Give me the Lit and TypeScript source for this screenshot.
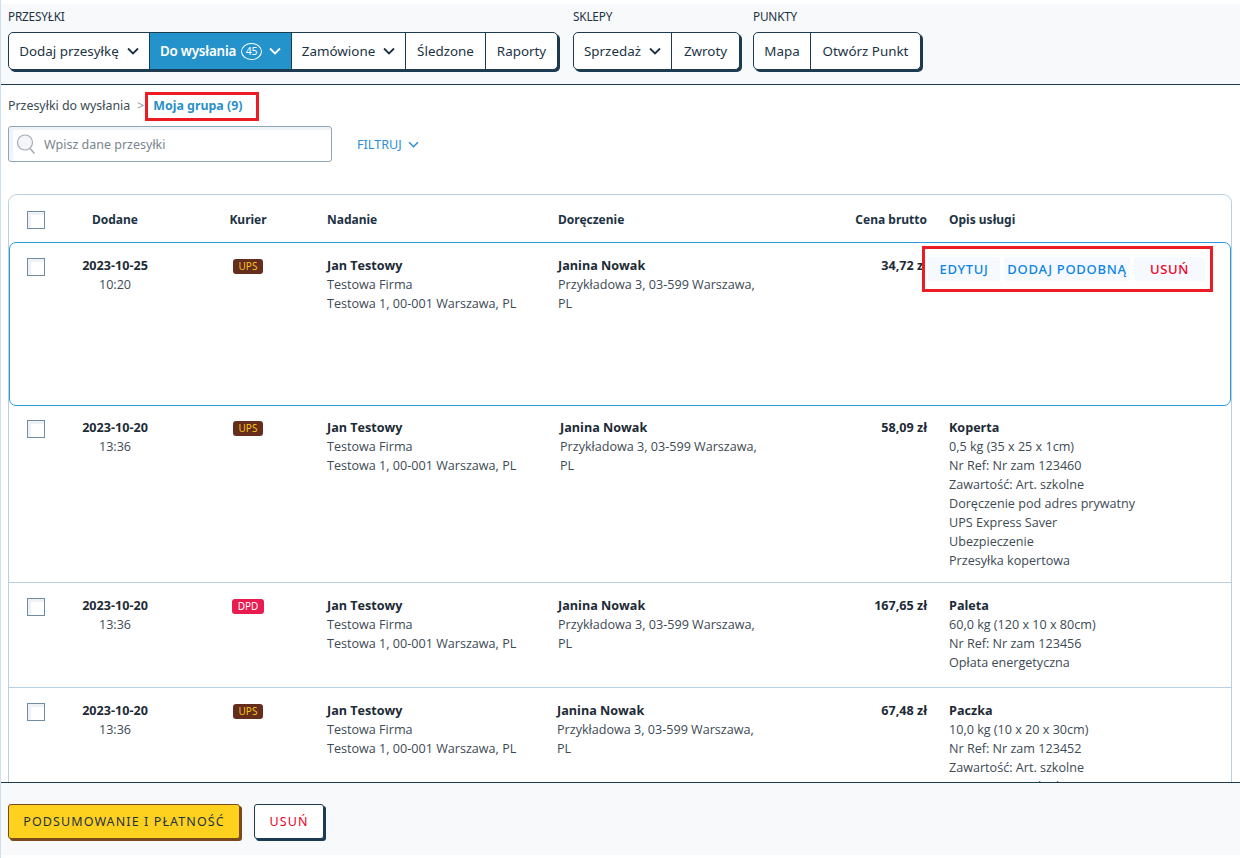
import { LitElement, html, css } from 'lit';
import { customElement } from 'lit/decorators.js';

const chevron = html`<svg class="chev" viewBox="0 0 12 8"><path d="M1 1.5l5 5 5-5" fill="none" stroke="currentColor" stroke-width="1.8"/></svg>`;

const ADDR = 'Przykładowa 3, 03-599 Warszawa, PL';

const rows = [
  {
    date: '2023-10-20', time: '13:36', courier: 'UPS', to: 'Janina Nowak', shift: 2, price: '58,09 zł',
    title: 'Koperta',
    desc: ['0,5 kg (35 x 25 x 1cm)', 'Nr Ref: Nr zam 123460', 'Zawartość: Art. szkolne', 'Doręczenie pod adres prywatny', 'UPS Express Saver', 'Ubezpieczenie', 'Przesyłka kopertowa'],
  },
  {
    date: '2023-10-20', time: '13:36', courier: 'DPD', to: 'Janina Nowak', shift: 0, price: '167,65 zł',
    title: 'Paleta',
    desc: ['60,0 kg (120 x 10 x 80cm)', 'Nr Ref: Nr zam 123456', 'Opłata energetyczna'],
  },
  {
    date: '2023-10-20', time: '13:36', courier: 'UPS', to: 'Janina Nowak', shift: -1, price: '67,48 zł',
    title: 'Paczka',
    desc: ['10,0 kg (10 x 20 x 30cm)', 'Nr Ref: Nr zam 123452', 'Zawartość: Art. szkolne', 'Doręczenie pod adres prywatny', 'UPS Express Saver'],
  },
];

@customElement('app-root')
export class AppRoot extends LitElement {
  static styles = css`
    :host {
      display: flex;
      flex-direction: column;
      height: 858px;
      overflow: hidden;
      font-family: 'Noto Sans', sans-serif;
      font-size: 12px;
      color: #1d3344;
      background: #fff;
      border-left: 1px solid #cfdfee;
      box-sizing: border-box;
    }

    .topbar {
      margin-top: 4px;
      height: 81px;
      flex: none;
      box-sizing: border-box;
      background: #f8f9fb;
      border-bottom: 1px solid #1d3b50;
      padding: 5px 7px 0;
      display: flex;
      gap: 15px;
    }
    .group.last { margin-left: -2px; }
    .group-label { font-size: 11.8px; line-height: 14px; height: 23px; letter-spacing: -0.2px; }
    .btns {
      display: flex;
      height: 38px;
      box-sizing: border-box;
      background: #fff;
      border: 1px solid #1d3b50;
      border-radius: 5px;
      box-shadow: 2px 2px 0 #1d3b50;
      overflow: hidden;
    }
    .btn {
      display: flex;
      align-items: center;
      justify-content: center;
      gap: 8px;
      box-sizing: border-box;
      font-size: 13.4px;
      border-left: 1px solid #1d3b50;
    }
    .btn:first-child { border-left: none; }
    .btn.active { background: #2493cb; color: #fff; font-weight: 600; gap: 5px; letter-spacing: -0.2px; }
    .btn.active .chev { margin-left: 2px; }
    .count {
      border: 1px solid #fff;
      border-radius: 50%;
      width: 19px;
      height: 15px;
      font-size: 10.5px;
      line-height: 15px;
      text-align: center;
      font-weight: 400;
    }
    .chev { width: 12px; height: 8px; }

    .main { flex: 1; min-height: 0; overflow: hidden; padding: 7px 8px 0 7px; }
    .crumbs { display: flex; align-items: center; height: 29px; font-size: 12.4px; color: #3b4a55; }
    .crumbs > span:not(.crumb-current) { padding-bottom: 2px; }
    .crumb-sep { margin: 0 1px 0 7px; color: #8a959d; }
    .crumb-current {
      border: 3px solid #ed1c24;
      height: 29px;
      box-sizing: border-box;
      padding: 0 14px 2px 5px;
      display: flex;
      align-items: center;
      color: #2b8fc7;
      font-weight: 700;
    }

    .search-row { display: flex; align-items: center; margin-top: 5px; }
    .search {
      width: 324px;
      height: 36px;
      box-sizing: border-box;
      border: 1px solid #8fa6b8;
      border-radius: 3px;
      box-shadow: inset 4px 3px 0 #f1f4f7;
      display: flex;
      align-items: center;
      gap: 8px;
      padding-left: 7px;
      color: #7a858d;
      font-size: 12.5px;
    }
    .search svg { width: 20px; height: 22px; }
    .filter {
      margin-left: 25px;
      color: #2b90dc;
      font-size: 12.6px;
      display: flex;
      align-items: center;
      gap: 6px;
    }
    .filter .chev { width: 11px; height: 7px; margin: 0; }

    .table {
      margin-top: 32px;
      border: 1px solid #b9d0e2;
      border-bottom: none;
      border-radius: 9px 9px 0 0;
    }
    .grid {
      display: grid;
      grid-template-columns: 42px 128px 148px 231px 231px 138px 22px 1fr;
    }
    .head { height: 47px; padding-top: 2px; box-sizing: border-box; align-items: center; font-weight: 700; font-size: 12px; }
    .center { text-align: center; }
    .right { text-align: right; }
    .kurier { padding-right: 10px; }
    .check {
      display: block;
      width: 18px;
      height: 18px;
      margin-left: 18px;
      box-sizing: border-box;
      border: 1px solid #6f8ca3;
      background: #fff;
      box-shadow: inset 3px 3px 0 #eef1f5;
    }
    .row {
      box-sizing: border-box;
      padding: 13px 0 12px;
      min-height: 105px;
      font-family: 'Open Sans', sans-serif;
      font-size: 12.6px;
      line-height: 19px;
      color: #3d4a54;
      border-bottom: 1px solid #b9d0e2;
    }
    .row > div:first-child .check { margin-top: 2px; }
    .row.selected {
      position: relative;
      height: 164px;
      margin-bottom: -1px;
      border: 1px solid #2b9bd6;
      border-radius: 7px;
      grid-template-columns: 41px 128px 148px 231px 231px 138px 22px 1fr;
    }
    .row.selected .check { margin-left: 17px; }
    .strong { font-weight: 700; color: #1d2b36; }
    .badge-cell { display: flex; justify-content: center; padding: 3px 10px 0 0; }
    .badge {
      height: 15px;
      line-height: 15px;
      padding: 0 6px;
      border-radius: 3px;
      font-family: 'Noto Sans', sans-serif;
      font-size: 10px;
    }
    .badge.UPS { background: #642d1e; color: #f8c51c; }
    .badge.DPD { background: #e81c4f; color: #fff; }
    .addr { width: 205px; }

    .actions {
      position: absolute;
      top: 3px;
      left: 912px;
      width: 291px;
      height: 46px;
      box-sizing: border-box;
      border: 3px solid #ed1c24;
      display: flex;
      align-items: center;
      gap: 4px;
      padding-left: 3px;
      background: #fff;
    }
    .action {
      height: 24px;
      line-height: 24px;
      background: #f6fafe;
      border-radius: 3px;
      color: #0a84e8;
      font-family: 'Noto Sans', sans-serif;
      font-size: 13px;
      font-weight: 500;
      letter-spacing: 0.7px;
      text-align: center;
      white-space: nowrap;
    }
    .action.edit { width: 72px; }
    .action.like { width: 126px; }
    .action.del { width: 71px; color: #f0001f; }

    .footer {
      flex: none;
      height: 73px;
      margin-bottom: 3px;
      box-sizing: border-box;
      background: #f8f9fb;
      border-top: 1px solid #1d3b50;
      padding: 21px 7px 0;
      display: flex;
      gap: 14px;
      align-items: flex-start;
    }
    .fbtn {
      height: 35px;
      box-sizing: border-box;
      border-radius: 3px;
      font-size: 12.5px;
      letter-spacing: 1.1px;
      display: flex;
      align-items: center;
      justify-content: center;
    }
    .fbtn.pay { width: 232px; background: #ffd11f; border: 1px solid #7a4a1e; box-shadow: 2px 2px 0 #7a4a1e; color: #1d3344; }
    .fbtn.del { width: 70px; background: #fff; border: 1px solid #1d3b50; box-shadow: 2px 2px 0 #1d3b50; color: #f0001f; }
  `;

  private navBtn(label: string, width: number, drop = false) {
    return html`<div class="btn" style="width:${width}px">${label}${drop ? chevron : ''}</div>`;
  }

  private address() {
    return html`<div class="strong">Jan Testowy</div><div>Testowa Firma</div><div>Testowa 1, 00-001 Warszawa, PL</div>`;
  }

  render() {
    return html`
      <div class="topbar">
        <div class="group">
          <div class="group-label">PRZESYŁKI</div>
          <div class="btns">
            ${this.navBtn('Dodaj przesyłkę', 140, true)}
            <div class="btn active" style="width:142px">Do wysłania <span class="count">45</span>${chevron}</div>
            ${this.navBtn('Zamówione', 114, true)}
            ${this.navBtn('Śledzone', 80)}
            ${this.navBtn('Raporty', 72)}
          </div>
        </div>
        <div class="group">
          <div class="group-label">SKLEPY</div>
          <div class="btns">
            ${this.navBtn('Sprzedaż', 97, true)}
            ${this.navBtn('Zwroty', 68)}
          </div>
        </div>
        <div class="group last">
          <div class="group-label">PUNKTY</div>
          <div class="btns">
            ${this.navBtn('Mapa', 56)}
            ${this.navBtn('Otwórz Punkt', 110)}
          </div>
        </div>
      </div>

      <div class="main">
        <div class="crumbs">
          <span>Przesyłki do wysłania</span>
          <span class="crumb-sep">&gt;</span>
          <span class="crumb-current">Moja grupa (9)</span>
        </div>
        <div class="search-row">
          <div class="search">
            <svg viewBox="0 0 20 22"><circle cx="9" cy="9.5" r="7.5" fill="#f3f5f7" stroke="#a4adb4" stroke-width="1.2"/><path d="M14 15.5l4.5 5" stroke="#a4adb4" stroke-width="1.6"/></svg>
            <span>Wpisz dane przesyłki</span>
          </div>
          <div class="filter">FILTRUJ ${chevron}</div>
        </div>

        <div class="table">
          <div class="grid head">
            <div><span class="check"></span></div>
            <div class="center">Dodane</div>
            <div class="center kurier">Kurier</div>
            <div>Nadanie</div>
            <div>Doręczenie</div>
            <div class="right">Cena brutto</div>
            <div></div>
            <div>Opis usługi</div>
          </div>

          <div class="grid row selected">
            <div><span class="check"></span></div>
            <div class="center"><div class="strong">2023-10-25</div><div>10:20</div></div>
            <div class="badge-cell"><span class="badge UPS">UPS</span></div>
            <div>${this.address()}</div>
            <div class="addr"><div class="strong">Janina Nowak</div><div>${ADDR}</div></div>
            <div class="right strong">34,72 zł</div>
            <div></div>
            <div></div>
            <div class="actions">
              <span class="action edit">EDYTUJ</span>
              <span class="action like">DODAJ PODOBNĄ</span>
              <span class="action del">USUŃ</span>
            </div>
          </div>

          ${rows.map(r => html`
            <div class="grid row">
              <div><span class="check"></span></div>
              <div class="center"><div class="strong">${r.date}</div><div>${r.time}</div></div>
              <div class="badge-cell"><span class="badge ${r.courier}">${r.courier}</span></div>
              <div>${this.address()}</div>
              <div class="addr" style="margin-left:${r.shift}px"><div class="strong">${r.to}</div><div>${ADDR}</div></div>
              <div class="right strong">${r.price}</div>
              <div></div>
              <div>
                <div class="strong">${r.title}</div>
                ${r.desc.map(d => html`<div>${d}</div>`)}
              </div>
            </div>
          `)}
        </div>
      </div>

      <div class="footer">
        <div class="fbtn pay">PODSUMOWANIE I PŁATNOŚĆ</div>
        <div class="fbtn del">USUŃ</div>
      </div>
    `;
  }
}
